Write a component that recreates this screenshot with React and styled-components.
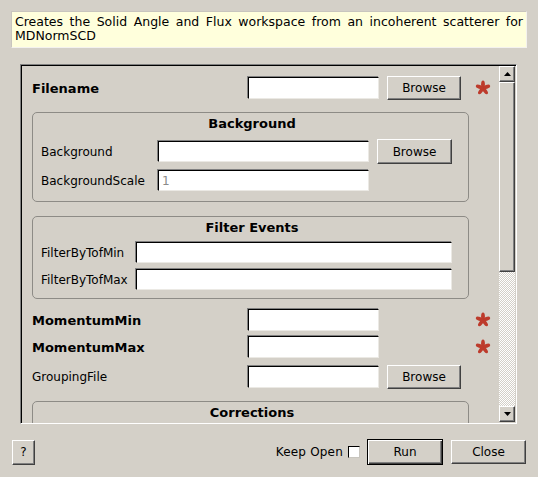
import React from 'react';
import styled, { createGlobalStyle } from 'styled-components';

const Global = createGlobalStyle`
  html, body { margin: 0; padding: 0; background: #d4d0c8; }
  body { font-family: "DejaVu Sans", "Liberation Sans", sans-serif; color: #000; }
  * { box-sizing: border-box; }
`;

const Page = styled.div`
  width: 538px;
  height: 477px;
  padding: 11px;
  display: flex;
  flex-direction: column;
  overflow: hidden;
`;

const Description = styled.div`
  height: 37px;
  flex-shrink: 0;
  background: #ffffdc;
  border: 1px solid;
  border-color: #c8c5be #f4f2ee #f4f2ee #c8c5be;
  padding: 3px 3px 0 3px;
  font-size: 12.5px;
  line-height: 14px;
  text-align: justify;
`;

const ScrollFrame = styled.div`
  margin: 16px 10px 0 9px;
  height: 360px;
  flex-shrink: 0;
  display: flex;
  border: 1px solid;
  border-color: #808080 #fff #fff #808080;
  box-shadow: inset 1px 1px 0 #000;
`;

const Content = styled.div`
  flex: 1;
  overflow: hidden;
  padding: 11px 0 0 11px;
  display: flex;
  flex-direction: column;
`;

const Scrollbar = styled.div`
  width: 16px;
  margin: 1px 1px 1px 0;
  display: flex;
  flex-direction: column;
`;

const raised = `
  background: #d4d0c8;
  border: 1px solid;
  border-color: #fff #404040 #404040 #fff;
  box-shadow: inset -1px -1px 0 #808080;
`;

const ScrollButton = styled.div`
  ${raised}
  height: 16px;
  flex-shrink: 0;
  display: flex;
  align-items: center;
  justify-content: center;
`;

const Thumb = styled.div`
  ${raised}
  height: ${p => p.$size}px;
  flex-shrink: 0;
`;

const Track = styled.div`
  flex: 1;
  background: repeating-conic-gradient(#fff 0 25%, #d4d0c8 0 50%) 0 0 / 2px 2px;
`;

const FieldRow = styled.div`
  display: grid;
  grid-template-columns: 208px 131px 74px 28px;
  column-gap: 8px;
  align-items: center;
  flex-shrink: 0;
  margin-top: ${p => p.$mt || 0}px;
`;

const FieldLabel = styled.span`
  font-size: ${p => (p.$bold ? '13px' : '12px')};
  font-weight: ${p => (p.$bold ? 700 : 400)};
  white-space: nowrap;
`;

const TextBox = styled.input`
  width: 100%;
  height: ${p => p.$h || 22}px;
  margin: 0;
  padding: 0 3px;
  background: #fff;
  border: 1px solid;
  border-color: #000 #ebe9e4 #ebe9e4 #000;
  box-shadow: -1px -1px 0 #808080;
  font-family: "DejaVu Sans", sans-serif;
  font-size: 12px;
  color: ${p => (p.$muted ? '#8a8a8a' : '#000')};
  outline: none;
`;

const Button = styled.button`
  ${raised}
  width: ${p => p.$w}px;
  height: ${p => p.$h}px;
  margin: 0;
  padding: 0;
  font-family: "DejaVu Sans", sans-serif;
  font-size: 12px;
  color: #000;
  display: flex;
  align-items: center;
  justify-content: center;
  ${p =>
    p.$default &&
    `
    border: 1px solid #000;
    box-shadow: inset 1px 1px 0 #fff, inset -1px -1px 0 #404040, inset -2px -2px 0 #808080;
  `}
`;

const StarCell = styled.div`
  display: flex;
  justify-content: center;
  align-items: center;
`;

const Group = styled.div`
  width: 437px;
  flex-shrink: 0;
  margin-top: ${p => p.$mt}px;
  border: 1px solid #8d8b86;
  border-radius: 5px;
  padding: 3px 16px ${p => p.$pb ?? 10}px 8px;
  min-height: ${p => p.$minH || 0}px;
`;

const GroupTitle = styled.div`
  margin: 0 -16px ${p => p.$gap}px -8px;
  padding-left: 3px;
  text-align: center;
  font-size: 13px;
  font-weight: 700;
  line-height: 16px;
`;

const GroupRow = styled.div`
  display: grid;
  grid-template-columns: ${p => p.$cols};
  column-gap: 8px;
  align-items: center;
  & + & { margin-top: 6px; }
`;

const Footer = styled.div`
  margin-top: 15px;
  height: 26px;
  flex-shrink: 0;
  display: flex;
  align-items: center;
  padding: 0 1px;
`;

const Spacer = styled.div`
  flex: 1;
`;

const KeepOpen = styled.span`
  font-size: 12px;
  letter-spacing: 0.2px;
  margin-right: 5px;
`;

const CheckBox = styled.span`
  width: 12px;
  height: 12px;
  background: #fff;
  border: 1px solid;
  border-color: #000 #c8c5be #c8c5be #000;
  margin-right: 7px;
`;

const FooterGap = styled.div`
  width: 8px;
`;

const Star = () => (
  <svg width="16" height="16" viewBox="-8 -8 16 16">
    {[0, 72, 144, 216, 288].map(a => (
      <ellipse key={a} cx="0" cy="-3.7" rx="1.9" ry="3.8" transform={`rotate(${a})`} fill="#bd3b2c" />
    ))}
  </svg>
);

const Arrow = ({ down }) => (
  <svg width="7" height="4" viewBox="0 0 7 4">
    <polygon points={down ? '0,0 7,0 3.5,4' : '0,4 7,4 3.5,0'} fill="#000" />
  </svg>
);

const Field = ({ label, bold, browse, required, mt }) => (
  <FieldRow $mt={mt}>
    <FieldLabel $bold={bold}>{label}</FieldLabel>
    <TextBox readOnly value="" />
    {browse ? <Button $w={74} $h={24}>Browse</Button> : <span />}
    <StarCell>{required ? <Star /> : null}</StarCell>
  </FieldRow>
);

export default function App() {
  return (
    <>
      <Global />
      <Page>
        <Description>
          Creates the Solid Angle and Flux workspace from an incoherent scatterer for MDNormSCD
        </Description>
        <ScrollFrame>
          <Content>
            <Field label="Filename" bold browse required />
            <Group $mt={12}>
              <GroupTitle $gap={7}>Background</GroupTitle>
              <GroupRow $cols="109px 211px 75px">
                <FieldLabel>Background</FieldLabel>
                <TextBox $h={21} readOnly value="" />
                <Button $w={75} $h={25}>Browse</Button>
              </GroupRow>
              <GroupRow $cols="109px 211px 75px">
                <FieldLabel>BackgroundScale</FieldLabel>
                <TextBox $h={21} $muted readOnly value="1" />
              </GroupRow>
            </Group>
            <Group $mt={14} $pb={8}>
              <GroupTitle $gap={6}>Filter Events</GroupTitle>
              <GroupRow $cols="87px 316px">
                <FieldLabel>FilterByTofMin</FieldLabel>
                <TextBox $h={21} readOnly value="" />
              </GroupRow>
              <GroupRow $cols="87px 316px">
                <FieldLabel>FilterByTofMax</FieldLabel>
                <TextBox $h={21} readOnly value="" />
              </GroupRow>
            </Group>
            <Field label="MomentumMin" bold required mt={10} />
            <Field label="MomentumMax" bold required mt={5} />
            <Field label="GroupingFile" browse mt={7} />
            <Group $mt={12} $minH={80}>
              <GroupTitle $gap={5}>Corrections</GroupTitle>
            </Group>
          </Content>
          <Scrollbar>
            <ScrollButton><Arrow /></ScrollButton>
            <Thumb $size={190} />
            <Track />
            <ScrollButton><Arrow down /></ScrollButton>
          </Scrollbar>
        </ScrollFrame>
        <Footer>
          <Button $w={23} $h={25}>?</Button>
          <Spacer />
          <KeepOpen>Keep Open</KeepOpen>
          <CheckBox />
          <Button $w={76} $h={26} $default>Run</Button>
          <FooterGap />
          <Button $w={75} $h={24}>Close</Button>
        </Footer>
      </Page>
    </>
  );
}
